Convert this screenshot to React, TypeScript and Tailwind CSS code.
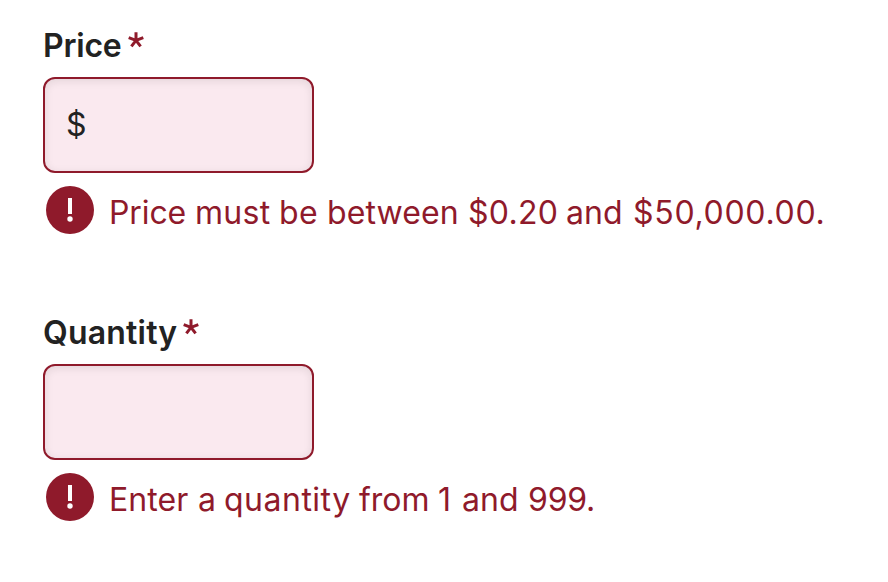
import React from "react";

type Word = { text: string; style: string };

type FieldProps = {
  id: string;
  label: string;
  labelStyle: string;
  prefix?: string;
  message: Word[];
};

const priceMessage: Word[] = [
  { text: "Price", style: "w-[86px] -tracking-[0.1px]" },
  { text: "must", style: "w-[84px] tracking-[0.3px]" },
  { text: "be", style: "w-[48px] tracking-[0.5px]" },
  { text: "between", style: "w-[141px] tracking-[0.1px]" },
  { text: "$0.20", style: "w-[98px] tracking-[0.3px]" },
  { text: "and", style: "w-[67px]" },
  { text: "$50,000.00.", style: "w-[200px] tracking-[0.7px]" },
];

const quantityMessage: Word[] = [
  { text: "Enter", style: "w-[89px] tracking-[0.1px]" },
  { text: "a", style: "w-[26px]" },
  { text: "quantity", style: "w-[135px] tracking-[0.5px]" },
  { text: "from", style: "w-[79px]" },
  { text: "1", style: "w-[24px]" },
  { text: "and", style: "w-[66px]" },
  { text: "999.", style: "w-[80px] -tracking-[0.2px]" },
];

function AlertIcon() {
  return (
    <svg className="h-12 w-12 shrink-0" viewBox="0 0 48 48" aria-hidden="true">
      <circle cx="24" cy="24" r="24" fill="#8f1a2b" />
      <rect x="22" y="12" width="4" height="16" fill="#fff" />
      <circle cx="24" cy="33" r="2.7" fill="#fff" />
    </svg>
  );
}

function Asterisk() {
  return (
    <svg className="mt-[11px] h-4 w-4" viewBox="0 0 16 16" aria-label="required">
      <path
        d="M8 8.4V.2M8 8.4L.7 5.6M8 8.4l7.3-2.8M8 8.4l-4.6 6M8 8.4l4.6 6"
        stroke="#8f1a2b"
        strokeWidth="3"
        fill="none"
      />
    </svg>
  );
}

function Field({ id, label, labelStyle, prefix, message }: FieldProps) {
  return (
    <div className="flex h-[287px] flex-col">
      <label htmlFor={id} className="flex h-12 leading-[48px]">
        <span className={`pt-px font-semibold whitespace-nowrap text-[#222222] ${labelStyle}`}>{label}</span>
        <Asterisk />
      </label>
      <div className="mt-2 flex h-24 w-[271px] items-center rounded-[12px] border-2 border-[#8f1a2b] bg-[#fae9ef] px-[22px] shadow-[inset_0_2px_8px_rgba(34,34,34,0.1)]">
        {prefix && <span className="-mt-px -ml-px text-[#222222]">{prefix}</span>}
        <input id={id} className="w-full min-w-0 bg-transparent outline-none" />
      </div>
      <div className="mt-[13px] flex pl-[3px]">
        <AlertIcon />
        <p className="mt-[3px] ml-[15px] flex leading-[48px] text-[#8f1a2b]">
          {message.map((word, i) => (
            <span key={i} className={`whitespace-pre ${word.style}`}>
              {word.text + " "}
            </span>
          ))}
        </p>
      </div>
    </div>
  );
}

export default function App() {
  return (
    <main className="h-[582px] w-[888px] overflow-hidden bg-white pt-[21px] pl-[43px] font-[Inter,sans-serif] text-[32px]">
      <Field id="price" label="Price" labelStyle="w-[85px] -tracking-[0.2px]" prefix="$" message={priceMessage} />
      <Field id="quantity" label="Quantity" labelStyle="w-[140px] tracking-[0.2px]" message={quantityMessage} />
    </main>
  );
}
